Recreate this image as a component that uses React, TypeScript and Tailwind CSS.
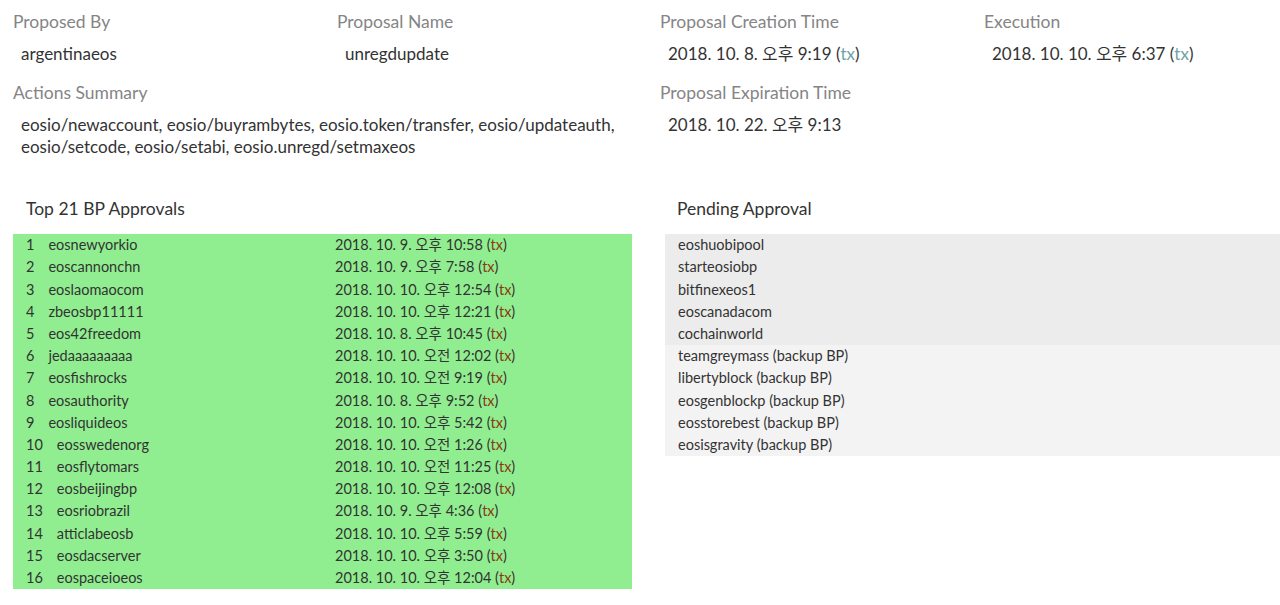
import type { ReactNode } from "react";

const approvals: [string, string][] = [
	["eosnewyorkio", "2018. 10. 9. 오후 10:58"],
	["eoscannonchn", "2018. 10. 9. 오후 7:58"],
	["eoslaomaocom", "2018. 10. 10. 오후 12:54"],
	["zbeosbp11111", "2018. 10. 10. 오후 12:21"],
	["eos42freedom", "2018. 10. 8. 오후 10:45"],
	["jedaaaaaaaaa", "2018. 10. 10. 오전 12:02"],
	["eosfishrocks", "2018. 10. 10. 오전 9:19"],
	["eosauthority", "2018. 10. 8. 오후 9:52"],
	["eosliquideos", "2018. 10. 10. 오후 5:42"],
	["eosswedenorg", "2018. 10. 10. 오전 1:26"],
	["eosflytomars", "2018. 10. 10. 오전 11:25"],
	["eosbeijingbp", "2018. 10. 10. 오후 12:08"],
	["eosriobrazil", "2018. 10. 9. 오후 4:36"],
	["atticlabeosb", "2018. 10. 10. 오후 5:59"],
	["eosdacserver", "2018. 10. 10. 오후 3:50"],
	["eospaceioeos", "2018. 10. 10. 오후 12:04"],
];

const pendingTop = ["eoshuobipool", "starteosiobp", "bitfinexeos1", "eoscanadacom", "cochainworld"];
const pendingBackup = ["teamgreymass", "libertyblock", "eosgenblockp", "eosstorebest", "eosisgravity"];

function Field({ label, children }: { label: string; children: ReactNode }) {
	return (
		<div className="flex flex-col">
			<div className="text-[17.5px] leading-[22px] text-[#858585]">{label}</div>
			<div className="mt-[10px] pl-2 text-[17px] leading-[22px] text-[#333]">{children}</div>
		</div>
	);
}

function Tx({ className }: { className: string }) {
	return (
		<>
			{" ("}
			<span className={className}>tx</span>
			{")"}
		</>
	);
}

export default function App() {
	return (
		<div
			className="h-[605px] w-[1280px] overflow-hidden bg-white"
			style={{ fontFamily: '"Lato", "Noto Sans CJK KR", sans-serif' }}
		>
			<div className="grid grid-cols-[324px_323px_324px_1fr] gap-y-[17px] pt-[11px] pl-[13px]">
				<Field label="Proposed By">argentinaeos</Field>
				<Field label="Proposal Name">unregdupdate</Field>
				<Field label="Proposal Creation Time">
					2018. 10. 8. 오후 9:19
					<Tx className="text-[#6ea3ab]" />
				</Field>
				<Field label="Execution">
					2018. 10. 10. 오후 6:37
					<Tx className="text-[#6ea3ab]" />
				</Field>
				<div className="col-span-2 pr-4">
					<Field label="Actions Summary">
						eosio/newaccount, eosio/buyrambytes, eosio.token/transfer, eosio/updateauth,
						<br />
						eosio/setcode, eosio/setabi, eosio.unregd/setmaxeos
					</Field>
				</div>
				<div className="col-span-2">
					<Field label="Proposal Expiration Time">2018. 10. 22. 오후 9:13</Field>
				</div>
			</div>

			<div className="mt-[40px] flex">
				<div className="ml-[13px] w-[619px]">
					<h3 className="pl-[13px] text-[17.5px] leading-[22px] text-[#333]">Top 21 BP Approvals</h3>
					<div className="mt-[14px] bg-[#90ee90] text-[14.5px] text-[#333]">
						{approvals.map(([name, time], i) => (
							<div key={name} className="flex h-[22.2px] items-center">
								<div className="flex w-[322px] pl-[13px]">
									<span>{i + 1}</span>
									<span className="ml-[14px]">{name}</span>
								</div>
								<div>
									{time}
									<Tx className="text-[#8b3a10]" />
								</div>
							</div>
						))}
					</div>
				</div>
				<div className="ml-[33px] flex-1">
					<h3 className="pl-[12px] text-[17.5px] leading-[22px] text-[#333]">Pending Approval</h3>
					<div className="mt-[14px] text-[14.5px] text-[#333]">
						{pendingTop.map((n) => (
							<div key={n} className="flex h-[22.2px] items-center bg-[#ececec] pl-[13px]">
								{n}
							</div>
						))}
						{pendingBackup.map((n) => (
							<div key={n} className="flex h-[22.2px] items-center bg-[#f3f3f3] pl-[13px]">
								{n} (backup BP)
							</div>
						))}
					</div>
				</div>
			</div>
		</div>
	);
}
